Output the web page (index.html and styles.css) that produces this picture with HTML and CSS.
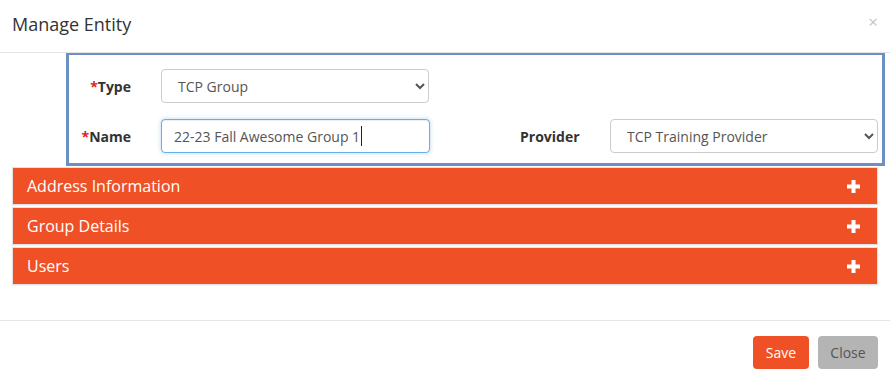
FILE: index.html
```html
<!DOCTYPE html>
<html lang="en">
<head>
    <meta charset="UTF-8">
    <meta name="viewport" content="width=device-width, initial-scale=1.0">
    <title>Manage Entity</title>
    <link rel="stylesheet" href="styles.css">
</head>
<body>

    <div class="modal">
        <div class="modal-header">
            <h4 class="modal-title">Manage Entity</h4>
            <span class="close">&times;</span>
        </div>

        <div class="modal-body">
            <div class="entity-box">
                <div class="form-row">
                    <label class="form-label"><span class="req">*</span>Type</label>
                    <select class="form-control">
                        <option>TCP Group</option>
                    </select>
                </div>
                <div class="form-row">
                    <label class="form-label"><span class="req">*</span>Name</label>
                    <span class="input-wrap">
                        <input type="text" class="form-control focused" value="22-23 Fall Awesome Group 1">
                        <span class="caret"></span>
                    </span>
                    <label class="form-label provider-label">Provider</label>
                    <select class="form-control">
                        <option>TCP Training Provider</option>
                    </select>
                </div>
            </div>

            <div class="panel">
                <div class="panel-heading">
                    <span>Address Information</span>
                    <svg class="plus" width="13" height="13" viewBox="0 0 13 13"><rect x="4.5" y="0" width="4" height="13" fill="#fff"/><rect x="0" y="4.5" width="13" height="4" fill="#fff"/></svg>
                </div>
            </div>
            <div class="panel">
                <div class="panel-heading">
                    <span>Group Details</span>
                    <svg class="plus" width="13" height="13" viewBox="0 0 13 13"><rect x="4.5" y="0" width="4" height="13" fill="#fff"/><rect x="0" y="4.5" width="13" height="4" fill="#fff"/></svg>
                </div>
            </div>
            <div class="panel">
                <div class="panel-heading">
                    <span>Users</span>
                    <svg class="plus" width="13" height="13" viewBox="0 0 13 13"><rect x="4.5" y="0" width="4" height="13" fill="#fff"/><rect x="0" y="4.5" width="13" height="4" fill="#fff"/></svg>
                </div>
            </div>
        </div>

        <div class="modal-footer">
            <button class="btn btn-save">Save</button>
            <button class="btn btn-close">Close</button>
        </div>
    </div>

</body>
</html>
```

FILE: styles.css
```css
body {
    font-family: 'Open Sans', 'Liberation Sans', sans-serif;
    font-size: 14px;
    color: #333;
    background-color: white;
    margin: 0;
}
.modal {
    width: 890px;
}
.modal-header {
    position: relative;
    box-sizing: border-box;
    height: 53px;
    padding: 0 12px 5px;
    border-bottom: 1px solid #e5e5e5;
    display: flex;
    align-items: center;
}
.modal-title {
    margin: 0;
    font-size: 18px;
    font-weight: normal;
    color: #333;
}
.close {
    position: absolute;
    right: 12px;
    top: 10px;
    font-size: 17px;
    color: #c4c4c4;
}
.modal-body {
    padding: 0 12px 33px;
}
.entity-box {
    margin: -1px -7px 1px 54px;
    border: 3px solid #6c90c2;
    padding: 14px 4px 10px 0;
}
.form-row {
    display: flex;
    align-items: center;
    margin-bottom: 16px;
}
.form-row:last-child {
    margin-bottom: 0;
}
.form-label {
    width: 62px;
    text-align: right;
    font-weight: bold;
    margin-right: 30px;
}
.provider-label {
    width: 59px;
    text-align: left;
    margin-left: 90px;
    margin-right: 31px;
}
.req {
    color: #e02020;
}
.form-control {
    box-sizing: border-box;
    width: 269px;
    height: 34px;
    padding: 6px 12px;
    font-family: inherit;
    font-size: 14px;
    color: #555;
    background-color: white;
    border: 1px solid #ccc;
    border-radius: 4px;
}
.form-row select:last-child {
    width: 268px;
}
.input-wrap {
    position: relative;
    display: flex;
}
.caret {
    position: absolute;
    left: 200px;
    top: 7px;
    width: 1px;
    height: 20px;
    background-color: #222;
}
.focused {
    border-color: #66afe9;
    outline: none;
    box-shadow: inset 0 1px 1px rgba(0, 0, 0, 0.075), 0 0 4px rgba(102, 175, 233, 0.5);
}
.panel {
    border: 1px solid #e2e2e2;
    box-shadow: 0 1px 1px rgba(0, 0, 0, 0.05);
    margin-bottom: 2px;
}
.panel-heading {
    height: 36px;
    background-color: #f05025;
    color: white;
    font-size: 16px;
    padding: 0 17px 0 14px;
    display: flex;
    align-items: center;
    justify-content: space-between;
}
.modal-footer {
    border-top: 1px solid #e5e5e5;
    padding: 15px 12px 10px;
    display: flex;
    justify-content: flex-end;
    gap: 9px;
}
.btn {
    height: 33px;
    padding: 0 12px;
    font-family: inherit;
    font-size: 14px;
    border: none;
    border-radius: 4px;
    cursor: pointer;
}
.btn-save {
    width: 56px;
    background-color: #f05025;
    color: white;
}
.btn-close {
    width: 60px;
    background-color: #b4b4b4;
    color: #555;
}
```
